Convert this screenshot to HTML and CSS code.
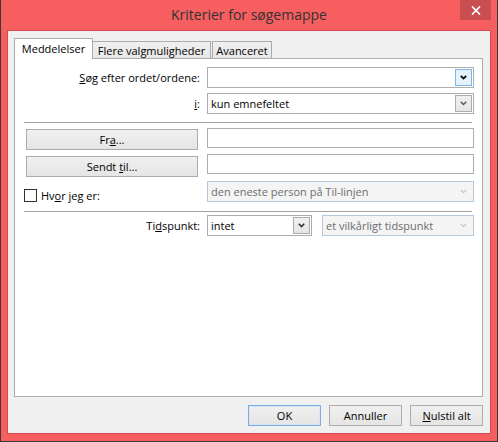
FILE: index.html
```html
<!DOCTYPE html>
<html lang="da">
<head>
<meta charset="utf-8">
<title>Kriterier for søgemappe</title>
<link rel="stylesheet" href="styles.css">
</head>
<body>
<div class="window">
  <div class="titlebar">
    <div class="title">Kriterier for søgemappe</div>
    <div class="close">
      <svg width="10" height="9" viewBox="0 0 10 9"><path d="M1 0.5 L9 8.5 M9 0.5 L1 8.5" stroke="#fff" stroke-width="1.7" fill="none"/></svg>
    </div>
  </div>
  <div class="client">
    <div class="tabs">
      <div class="tab active t1">Meddelelser</div>
      <div class="tab t2">Flere valgmuligheder</div>
      <div class="tab t3">Avanceret</div>
    </div>
    <div class="panel">
      <div class="row r1">
        <div class="lbl"><u>S</u>øg efter ordet/ordene:</div>
        <div class="combo focus">
          <span class="val"></span>
          <span class="arrow"><svg width="7" height="5" viewBox="0 0 7 5"><path d="M0.8 0.8 L3.5 3.6 L6.2 0.8" stroke="#000" stroke-width="1.7" fill="none"/></svg></span>
        </div>
      </div>
      <div class="row r2">
        <div class="lbl"><u>i</u>:</div>
        <div class="combo">
          <span class="val">kun emnefeltet</span>
          <span class="arrow"><svg width="7" height="5" viewBox="0 0 7 5"><path d="M0.8 0.8 L3.5 3.6 L6.2 0.8" stroke="#555" stroke-width="1.4" fill="none"/></svg></span>
        </div>
      </div>
      <div class="sep s1"></div>
      <div class="row r3">
        <button class="btn side">Fr<u>a</u>...</button>
        <div class="text"></div>
      </div>
      <div class="row r4">
        <button class="btn side">Sendt <u>t</u>il...</button>
        <div class="text"></div>
      </div>
      <div class="row r5">
        <div class="check"><span class="box"></span><span>Hv<u>o</u>r jeg er:</span></div>
        <div class="combo disabled">
          <span class="val">den eneste person på Til-linjen</span>
          <span class="arrow"><svg width="7" height="5" viewBox="0 0 7 5"><path d="M0.8 0.8 L3.5 3.6 L6.2 0.8" stroke="#c4c4c4" stroke-width="1.2" fill="none"/></svg></span>
        </div>
      </div>
      <div class="sep s2"></div>
      <div class="row r6">
        <div class="lbl">Ti<u>d</u>spunkt:</div>
        <div class="pair">
          <div class="combo short">
            <span class="val">intet</span>
            <span class="arrow"><svg width="7" height="5" viewBox="0 0 7 5"><path d="M0.8 0.8 L3.5 3.6 L6.2 0.8" stroke="#333" stroke-width="1.6" fill="none"/></svg></span>
          </div>
          <div class="combo disabled grow">
            <span class="val">et vilkårligt tidspunkt</span>
            <span class="arrow"><svg width="7" height="5" viewBox="0 0 7 5"><path d="M0.8 0.8 L3.5 3.6 L6.2 0.8" stroke="#c4c4c4" stroke-width="1.2" fill="none"/></svg></span>
          </div>
        </div>
      </div>
    </div>
    <div class="actions">
      <button class="btn act default">OK</button>
      <button class="btn act">Annuller</button>
      <button class="btn act"><u>N</u>ulstil alt</button>
    </div>
  </div>
</div>
</body>
</html>
```
FILE: styles.css
```css
* { box-sizing: border-box; }

body {
  margin: 0;
  font-family: "Open Sans", "Noto Sans", sans-serif;
  font-size: 11px;
  color: #000;
}

u { text-decoration: underline; text-underline-offset: 1px; }

.window {
  width: 498px;
  height: 442px;
  background: #f65e5f;
  border: 1px solid #3a3a3a;
  border-top: 0;
  display: flex;
  flex-direction: column;
}

.titlebar {
  height: 31px;
  flex: none;
  display: grid;
  grid-template-columns: 1fr auto 1fr;
}

.title {
  grid-column: 2;
  font-size: 14px;
  line-height: 30px;
  color: #333;
}

.close {
  grid-column: 3;
  justify-self: end;
  align-self: start;
  width: 31px;
  height: 20px;
  margin-right: 6px;
  background: #c84e50;
  display: flex;
  align-items: center;
  justify-content: center;
}

.client {
  flex: 1;
  margin: 0 7px 8px 7px;
  background: #f0f0f0;
  outline: 1px solid #d9484c;
  padding: 7px 7px 7px 6px;
  display: flex;
  flex-direction: column;
}

.tabs {
  flex: none;
  height: 21px;
  display: flex;
  align-items: flex-end;
  margin-bottom: -1px;
  position: relative;
  z-index: 1;
}

.tab {
  height: 17px;
  margin-bottom: 1px;
  border: 1px solid #acacac;
  border-bottom: 0;
  background: linear-gradient(#f0f0f0, #e8e8e8);
  display: flex;
  align-items: center;
  justify-content: center;
  white-space: nowrap;
}

.tab.active {
  height: 21px;
  margin-bottom: 0;
  background: #fff;
  padding-bottom: 1px;
}

.t1 { width: 79px; }
.t2 { width: 118px; border-left: 0; }
.t3 { width: 60px; margin-left: 1px; }

.panel {
  flex: 1;
  background: #fff;
  border: 1px solid #acacac;
  padding: 8px 8px 0 9px;
}

.row {
  display: grid;
  grid-template-columns: 176px 267px;
  column-gap: 7px;
}

.r2 { margin-top: 5px; }
.r3 { margin-top: 5px; }
.r4 { margin-top: 4px; }
.r5 { margin-top: 4px; }
.r6 { margin-top: 3px; }

.lbl {
  text-align: right;
  align-self: center;
  white-space: nowrap;
}

.sep {
  height: 1px;
  background: #a0a0a0;
  margin-right: 2px;
}
.s1 { margin-top: 8px; }
.s2 { margin-top: 9px; }

.combo {
  height: 21px;
  border: 1px solid #abadb3;
  background: #fff;
  display: flex;
  align-items: center;
  padding: 0 1px 0 3px;
}

.combo .val {
  flex: 1;
  white-space: nowrap;
  overflow: hidden;
}

.combo .arrow {
  width: 17px;
  height: 17px;
  border: 1px solid #acacac;
  background: linear-gradient(#f0f0f0, #e5e5e5);
  display: flex;
  align-items: center;
  justify-content: center;
}

.combo.focus .arrow {
  border-color: #7eb4ea;
  background: #e5f1fb;
}

.combo.disabled {
  background: #f4f4f4;
  border-color: #b5c7dc;
  color: #6d6d6d;
}

.combo.disabled .arrow {
  border-color: transparent;
  background: transparent;
}

.pair {
  display: flex;
  gap: 10px;
}
.short { width: 105px; }
.grow { flex: 1; }

.text {
  height: 20px;
  border: 1px solid #abadb3;
  background: #fff;
}

.btn {
  font: inherit;
  color: #000;
  height: 21px;
  padding: 0;
  border: 1px solid #acacac;
  background: linear-gradient(#f0f0f0, #e5e5e5);
}

.side { margin: 1px 2px 0; }
.r4 .side { margin-top: 2px; }

.check {
  align-self: end;
  display: flex;
  align-items: center;
  gap: 4px;
  height: 13px;
}

.box {
  width: 13px;
  height: 13px;
  border: 1px solid #333;
  background: #fff;
}

.actions {
  flex: none;
  margin-top: 8px;
  display: flex;
  justify-content: flex-end;
  gap: 8px;
}

.act { width: 73px; }

.default {
  border-color: #78aee6;
  box-shadow: inset 0 0 0 1px #d4e6f8;
}
```
